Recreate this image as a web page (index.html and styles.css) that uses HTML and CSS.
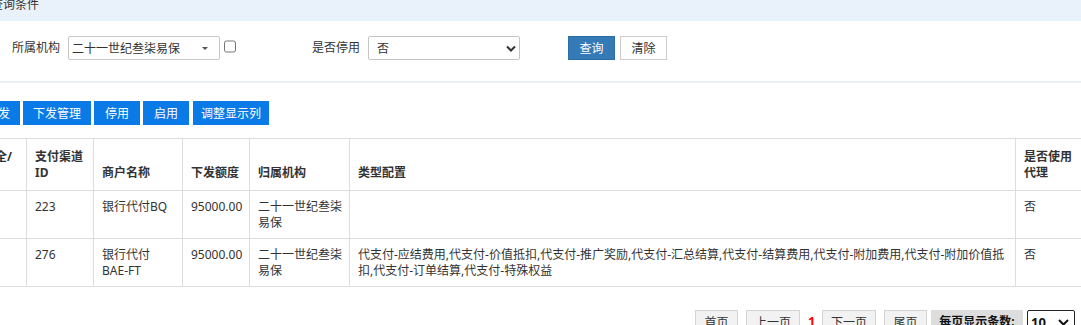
FILE: index.html
```html
<!DOCTYPE html>
<html lang="zh-CN">
<head>
    <meta charset="UTF-8">
    <title>下发管理</title>
    <link rel="stylesheet" href="styles.css">
</head>
<body>
    <div class="page">
        <div class="panel-head">查询条件</div>

        <div class="search">
            <div class="field field-org">
                <label>所属机构</label>
                <div class="combo">
                    <span>二十一世纪叁柒易保</span>
                    <span class="caret"></span>
                </div>
                <input type="checkbox" class="chk">
            </div>
            <div class="field">
                <label>是否停用</label>
                <div class="combo combo-native">
                    <span>否</span>
                    <svg width="10" height="7" viewBox="0 0 10 7"><path d="M1 1.5 L5 5.5 L9 1.5" fill="none" stroke="#333" stroke-width="2"/></svg>
                </div>
            </div>
            <div class="actions">
                <button class="btn-query">查询</button>
                <button class="btn-clear">清除</button>
            </div>
        </div>

        <div class="toolbar">
            <button>批量下发</button>
            <button>下发管理</button>
            <button>停用</button>
            <button>启用</button>
            <button>调整显示列</button>
        </div>

        <table class="grid">
            <colgroup>
                <col style="width:76px">
                <col style="width:67px">
                <col style="width:89px">
                <col style="width:67px">
                <col style="width:100px">
                <col style="width:666px">
                <col style="width:70px">
            </colgroup>
            <thead>
                <tr>
                    <th>代付安全/实名</th>
                    <th>支付渠道ID</th>
                    <th>商户名称</th>
                    <th>下发额度</th>
                    <th>归属机构</th>
                    <th>类型配置</th>
                    <th>是否使用代理</th>
                </tr>
            </thead>
            <tbody>
                <tr>
                    <td>是</td>
                    <td>223</td>
                    <td>银行代付BQ</td>
                    <td>95000.00</td>
                    <td>二十一世纪叁柒易保</td>
                    <td></td>
                    <td>否</td>
                </tr>
                <tr>
                    <td>是</td>
                    <td>276</td>
                    <td>银行代付<span class="nowrap">BAE-FT</span></td>
                    <td>95000.00</td>
                    <td>二十一世纪叁柒易保</td>
                    <td>代支付-应结费用,代支付-价值抵扣,代支付-推广奖励,代支付-汇总结算,代支付-结算费用,代支付-附加费用,代支付-附加价值抵扣,代支付-订单结算,代支付-特殊权益</td>
                    <td>否</td>
                </tr>
            </tbody>
        </table>

        <div class="pager">
            <button>首页</button>
            <button>上一页</button>
            <span class="current">1</span>
            <button>下一页</button>
            <button class="last">尾页</button>
            <span class="size-label">每页显示条数:</span>
            <div class="size-select">
                <span>10</span>
                <svg width="11" height="7" viewBox="0 0 11 7"><path d="M1 1 L5.5 5.5 L10 1" fill="none" stroke="#111" stroke-width="2"/></svg>
            </div>
        </div>
    </div>
</body>
</html>
```

FILE: styles.css
```css
body {
    margin: 0;
    overflow: hidden;
    font-family: "Noto Sans", "Noto Sans CJK SC", sans-serif;
    font-size: 12px;
    color: #333333;
    background: #ffffff;
}

/* la pagina e' scorrevole: qui e' spostata come nello screenshot */
.page {
    width: 1131px;
    margin-left: -50px;
    margin-top: -12px;
}

.panel-head {
    height: 33px;
    line-height: 33px;
    padding-left: 41px;
    background: #e9f1fb;
}

.search {
    display: flex;
    padding: 15px 0 21px 62px;
    border-bottom: 2px solid #e9f1fb;
}

.field {
    display: flex;
    align-items: center;
}

.field-org {
    width: 300px;
}

.field label {
    margin-right: 8px;
    line-height: 24px;
}

.combo {
    box-sizing: border-box;
    width: 152px;
    height: 24px;
    display: flex;
    align-items: center;
    justify-content: space-between;
    padding: 0 11px 0 3px;
    border: 1px solid #c9c9c9;
    border-radius: 2px;
}

.caret {
    width: 0;
    height: 0;
    border-left: 3px solid transparent;
    border-right: 3px solid transparent;
    border-top: 3px solid #555555;
}

.combo-native {
    padding: 0 3px 0 8px;
    border-color: #c4c4c4;
}

.chk {
    align-self: flex-start;
    width: 12px;
    height: 13px;
    margin: 4px 0 0 4px;
}

.actions {
    display: flex;
    gap: 5px;
    margin-left: 48px;
}

.actions button {
    width: 47px;
    height: 24px;
    font: inherit;
    cursor: pointer;
}

.btn-query {
    background: #337ab7;
    border: 1px solid #2e6da4;
    color: #ffffff;
}

.btn-clear {
    background: #ffffff;
    border: 1px solid #cccccc;
    color: #333333;
}

.toolbar {
    display: flex;
    gap: 3px;
    margin-top: 18px;
    padding-left: 2px;
}

.toolbar button {
    height: 24px;
    min-width: 46px;
    padding: 0 10px;
    border: none;
    background: #0a7ae6;
    color: #ffffff;
    font: inherit;
    cursor: pointer;
}

.toolbar button:last-child {
    margin-left: 1px;
    padding: 0 8px;
}

.grid {
    margin-top: 13px;
    width: 1135px;
    table-layout: fixed;
    border-collapse: collapse;
}

.grid th,
.grid td {
    border: 1px solid #dddddd;
    text-align: left;
    line-height: 16px;
    padding: 8px 6px 7px 8px;
}

.grid th {
    padding: 10px 6px 9px 8px;
    vertical-align: bottom;
    font-weight: bold;
}

.grid td {
    vertical-align: top;
}

.nowrap {
    white-space: nowrap;
}

.pager {
    display: flex;
    justify-content: flex-end;
    align-items: flex-start;
    margin-top: 23px;
    padding-right: 6px;
}

.pager button {
    height: 24px;
    padding: 0;
    width: 43px;
    margin-right: 8px;
    background: #f2f2f2;
    border: 1px solid #d4d4d4;
    color: #333333;
    font: inherit;
}

.pager button:nth-child(2),
.pager button:nth-child(4) {
    width: 54px;
}

.pager button:nth-child(2) {
    margin-right: 0;
}

.pager .last {
    margin-right: 4px;
}

.current {
    width: 6px;
    margin: 2px 8px 0;
    color: #ff0000;
    font-weight: bold;
    font-size: 13px;
}

.size-label {
    width: 92px;
    height: 24px;
    line-height: 24px;
    text-align: center;
    background: #dddddd;
    font-weight: bold;
    color: #111111;
    margin-right: 4px;
}

.size-select {
    box-sizing: border-box;
    width: 48px;
    height: 24px;
    display: flex;
    align-items: center;
    justify-content: space-between;
    padding: 0 5px 0 3px;
    border: 1px solid #222222;
    border-radius: 2px;
    font-weight: bold;
    font-size: 13px;
    color: #111111;
}
```
